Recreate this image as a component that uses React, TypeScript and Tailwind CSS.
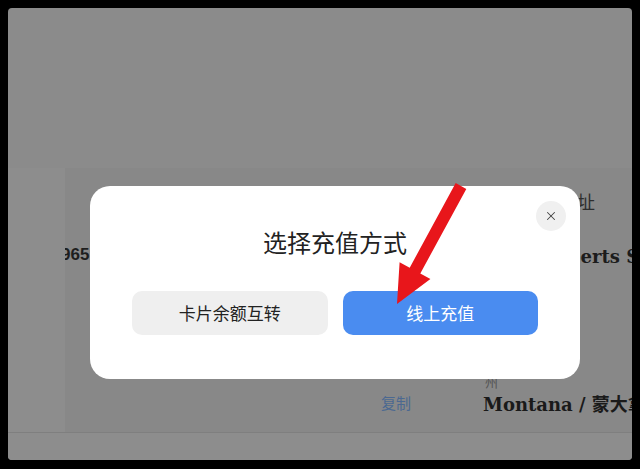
import { X } from 'lucide-react';

const CJK = "font-['Noto_Sans_CJK_SC','Noto_Sans',sans-serif]";
const SLAB = "font-['DejaVu_Serif','Noto_Sans_CJK_SC',serif]";

// Red annotation arrow drawn over the screenshot
function Arrow() {
  return (
    <svg
      className="absolute left-0 top-0 pointer-events-none"
      width="640"
      height="469"
      viewBox="0 0 640 469"
      aria-hidden="true"
    >
      <polygon
        points="455.7,183.1 466.3,188.9 420.3,273.5 430.4,279 397,304 399.6,262.3 409.7,267.7"
        fill="#e8161b"
      />
    </svg>
  );
}

function RechargeDialog() {
  return (
    <div
      className={`absolute left-[82px] top-[178px] w-[490px] h-[193px] bg-white rounded-[20px] flex flex-col items-center px-[42px] pt-[40px] ${CJK}`}
    >
      <button
        type="button"
        aria-label="关闭"
        className="absolute right-[14px] top-[15px] w-[30px] h-[30px] rounded-full bg-[#f0f0f0] flex items-center justify-center text-[#444]"
      >
        <X className="w-[14px] h-[14px]" strokeWidth={1.75} />
      </button>

      <h2 className="text-[24px] leading-[32px] text-[#222] font-normal">选择充值方式</h2>

      <div className="mt-[33px] w-full grid grid-cols-2 gap-[15px]">
        <button
          type="button"
          className="h-[44px] rounded-[10px] bg-[#efefef] text-[17px] text-[#222]"
        >
          卡片余额互转
        </button>
        <button
          type="button"
          className="h-[44px] rounded-[10px] bg-[#4a8cf0] text-[17px] text-white"
        >
          线上充值
        </button>
      </div>
    </div>
  );
}

export default function App() {
  return (
    <div className="relative w-[640px] h-[469px] bg-black pl-[8px] pt-[8px] overflow-hidden">
      {/* dimmed page behind the dialog */}
      <div className="relative w-[624px] h-[452px] rounded-[4px] bg-[#8b8b8b] overflow-hidden flex flex-col">
        <div className="h-[160px] shrink-0" />

        <div className="h-[264px] shrink-0 flex">
          <div className="w-[57px] shrink-0 bg-[#8d8d8d]" />
          <div className="flex-1 min-w-0 bg-[#888888] overflow-hidden flex flex-col">
            {/* address row */}
            <div className="h-[150px] grid grid-cols-[418px_1fr]">
              <div className="pt-[75px]">
                <span className="block -ml-[4px] text-[17px] leading-[24px] font-bold text-[#1e1e1e] font-['Liberation_Sans',sans-serif]">
                  965
                </span>
              </div>
              <div className="pt-[22px] whitespace-nowrap">
                <div className={`pl-[76px] text-[18px] leading-[22px] text-[#2e2e2e] ${CJK}`}>
                  地址
                </div>
                <div className={`mt-[33px] pl-[58px] text-[18px] leading-[24px] font-bold text-[#1c1c1c] ${SLAB}`}>
                  Roberts St
                </div>
              </div>
            </div>

            {/* state row */}
            <div className="flex-1 grid grid-cols-[418px_1fr]">
              <div className="flex justify-end pr-[72px] pt-[74px]">
                <span className={`text-[15px] leading-[22px] text-[#4b6891] ${CJK}`}>复制</span>
              </div>
              <div className="pt-[56px] whitespace-nowrap">
                <div className={`pl-[2px] text-[13px] leading-[16px] text-[#555] ${CJK}`}>州</div>
                <div className={`mt-[3px] text-[18px] leading-[24px] font-bold text-[#1a1a1a] ${SLAB}`}>
                  Montana / 蒙大拿州
                </div>
              </div>
            </div>
          </div>
        </div>

        <div className="flex-1 border-t border-[#7f7f7f] bg-[#8d8d8d]" />

        <RechargeDialog />
      </div>

      <Arrow />
    </div>
  );
}
